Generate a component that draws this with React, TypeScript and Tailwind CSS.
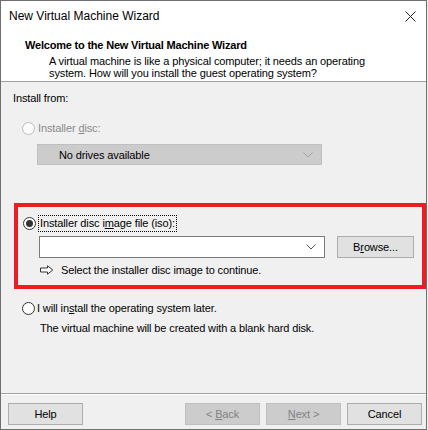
import React from "react";

const Radio = ({ checked, disabled }: { checked?: boolean; disabled?: boolean }) => (
  <span
    className={`flex h-[13px] w-[13px] shrink-0 items-center justify-center rounded-full border ${
      disabled ? "border-[#bcbcbc] bg-[#fcfcfc]" : "border-[#333333] bg-white"
    }`}
  >
    {checked && <span className="h-[7px] w-[7px] rounded-full bg-[#333333]" />}
  </span>
);

const Chevron = ({ color }: { color: string }) => (
  <svg width="10" height="6" viewBox="0 0 10 6" fill="none">
    <path d="M0.5 0.5 L5 5 L9.5 0.5" stroke={color} strokeWidth="1" />
  </svg>
);

const Btn = ({ children, disabled, className = "" }: { children: React.ReactNode; disabled?: boolean; className?: string }) => (
  <div
    className={`flex h-[22px] w-[75px] items-center justify-center border ${
      disabled ? "border-[#bfbfbf] bg-[#cccccc] text-[#838383]" : "border-[#adadad] bg-[#e1e1e1] text-black"
    } ${className}`}
  >
    <span className="whitespace-pre">{children}</span>
  </div>
);

export default function App() {
  return (
    <div className="h-[430px] w-[428px] bg-[#f0f0f0]" style={{ fontFamily: '"Liberation Sans", Arial, sans-serif' }}>
      <div className="flex h-[430px] w-[427px] flex-col border border-[#6f6f6f] bg-[#f0f0f0] text-[11px] leading-[14px] tracking-[-0.12px] text-black">
        {/* title bar */}
        <div className="flex h-[30px] items-center justify-between bg-white pl-[8px] pr-[10px]">
          <span className="text-[12px] tracking-normal">New Virtual Machine Wizard</span>
          <svg width="11" height="11" viewBox="0 0 11 11">
            <path d="M0.5 0.5 L10.5 10.5 M10.5 0.5 L0.5 10.5" stroke="#222" strokeWidth="1" />
          </svg>
        </div>

        {/* header */}
        <div className="h-[51px] border-b border-[#a0a0a0] bg-white pl-[24px] pt-[7px]">
          <div className="font-bold tracking-[-0.2px]">Welcome to the New Virtual Machine Wizard</div>
          <div className="mt-[3px] pl-[24px] leading-[12px]">
            A virtual machine is like a physical computer; it needs an operating
            <br />
            system. How will you install the guest operating system?
          </div>
        </div>

        {/* body */}
        <div className="flex flex-1 flex-col pl-[12px] pt-[9px]">
          <div className="leading-[15px]">Install from:</div>

          <div className="mt-[15px] flex items-center gap-[3px] pl-[9px] text-[#8a8a8a]">
            <Radio disabled />
            <span>
              Installer <span className="underline">d</span>isc:
            </span>
          </div>

          <div className="ml-[24px] mt-[9px] flex h-[21px] w-[285px] items-center justify-between border border-[#bfbfbf] bg-[#cccccc] pl-[21px] pr-[8px]">
            <span>No drives available</span>
            <Chevron color="#a0a0a0" />
          </div>

          <div className="ml-[1px] mt-[38px] flex h-[86px] w-[412px] flex-col border-[4px] border-[#ed1c24] pl-[4px] pt-[8px]">
            <div className="flex items-center gap-[2px] pl-[1px]">
              <Radio checked />
              <span className="border border-dotted border-black px-[1px] leading-[15px]">
                Installer disc i<span className="underline">m</span>age file (iso):
              </span>
            </div>
            <div className="mt-[4px] flex items-center pl-[17px]">
              <div className="flex h-[22px] w-[286px] items-center justify-end border border-[#7a7a7a] bg-white pr-[8px]">
                <Chevron color="#555555" />
              </div>
              <Btn className="ml-[12px] w-[77px]">
                B<span className="underline">r</span>owse...
              </Btn>
            </div>
            <div className="mt-[5px] flex items-center pl-[18px]">
              <svg width="14" height="10" viewBox="0 0 14 10" className="mr-[7px]">
                <path d="M0.5 3 H7.5 V0.8 L12.8 5 L7.5 9.2 V7 H0.5 Z" fill="white" stroke="#333" strokeWidth="1" />
              </svg>
              <span>Select the installer disc image to continue.</span>
            </div>
          </div>

          <div className="mt-[12px] flex items-center gap-[2px] pl-[9px]">
            <Radio />
            <span>
              I will in<span className="underline">s</span>tall the operating system later.
            </span>
          </div>
          <div className="mt-[6px] pl-[27px]">The virtual machine will be created with a blank hard disk.</div>
        </div>

        {/* footer */}
        <div className="h-[36px] border-t border-[#a0a0a0] shadow-[inset_0_1px_0_#ffffff]">
          <div className="mt-[9px] flex items-center pl-[7px]">
            <Btn>Help</Btn>
            <Btn disabled className="ml-[102px]">
              {"< "}<span className="underline">B</span>ack
            </Btn>
            <Btn disabled className="ml-[6px]">
              <span className="underline">N</span>{"ext >"}
            </Btn>
            <Btn className="ml-[6px]">Cancel</Btn>
          </div>
        </div>
      </div>
    </div>
  );
}
